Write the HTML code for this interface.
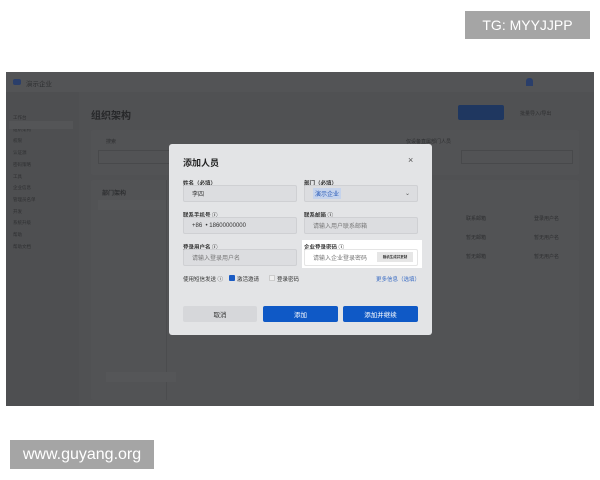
<!DOCTYPE html><html><head><meta charset="utf-8"><style>
*{margin:0;padding:0;box-sizing:border-box}
body{width:600px;height:480px;background:#fff;position:relative;overflow:hidden;font-family:"Liberation Sans","Noto Sans CJK SC",sans-serif}
.a{position:absolute}
.wm{background:#a5a5a5;color:#fff;font-size:14px;display:flex;align-items:center;justify-content:center}
.shot{left:6px;top:72px;width:588px;height:334px;background:#505153;overflow:hidden}
.t{color:#2e2f31;font-size:6px}
.modal{left:163px;top:72px;width:263px;height:191px;background:#e3e4e6;border-radius:3px}
.lbl{font-size:5.5px;color:#333;font-weight:bold}
.in{background:#dcdde0;border:1px solid #cfd0d3;border-radius:2px;height:17px;font-size:6px;color:#777;padding-left:8px;display:flex;align-items:center}
.btn{height:16px;border-radius:2px;font-size:6.5px;display:flex;align-items:center;justify-content:center}
</style></head><body>
<div class="a wm" style="left:465px;top:11px;width:125px;height:28px">TG: MYYJJPP</div>
<div class="a wm" style="left:10px;top:440px;width:144px;height:29px;font-size:16px">www.guyang.org</div>
<div class="a shot">
 <div class="a" style="left:0;top:0;width:588px;height:20px;background:#535456"></div>
 <div class="a" style="left:7px;top:7px;width:8px;height:6px;background:#2a3e6a;border-radius:2px"></div>
 <div class="a t" style="left:20px;top:6px;font-size:6.5px">演示企业</div>
 <div class="a" style="left:520px;top:6px;width:7px;height:8px;background:#2a3e6a;border-radius:3px 3px 0 0"></div>
 <div class="a" style="left:0;top:20px;width:73px;height:314px;background:#4e4f51"></div>
 <div class="a t" style="left:7px;top:40px;line-height:11.7px;font-size:4.5px">工作台<br>组织架构<br>权限<br>认证源<br>密码策略<br>工具<br>企业信息<br>管理员名单<br>开发<br>系统升级<br>帮助<br>帮助文档</div>
 <div class="a" style="left:3px;top:49px;width:64px;height:8px;background:#545557"></div>
 <div class="a t" style="left:85px;top:35px;font-size:10px;font-weight:bold;color:#27282a">组织架构</div>
 <div class="a" style="left:452px;top:33px;width:46px;height:15px;background:#1f3760;border-radius:2px"></div>
 <div class="a t" style="left:514px;top:38px;font-size:5px">批量导入/导出</div>
 <div class="a" style="left:85px;top:58px;width:488px;height:45px;border-radius:2px;background:#525355"></div>
 <div class="a t" style="left:100px;top:66px;font-size:5px">搜索</div>
 <div class="a t" style="left:400px;top:66px;font-size:5px">仅设备直属部门人员</div>
 <div class="a" style="left:92px;top:78px;width:80px;height:14px;border:1px solid #48494b"></div>
 <div class="a" style="left:455px;top:78px;width:112px;height:14px;border:1px solid #48494b"></div>
 <div class="a" style="left:85px;top:108px;width:488px;height:220px;border-radius:2px;background:#525355"></div>
 <div class="a t" style="left:96px;top:116px;font-size:6px;font-weight:bold">部门架构</div>
 <div class="a" style="left:92px;top:128px;width:80px;height:10px;background:#555658"></div>
 <div class="a" style="left:160px;top:108px;width:1px;height:220px;background:#4b4c4e"></div>
 <div class="a" style="left:100px;top:300px;width:70px;height:10px;background:#555658"></div>
 <div class="a t" style="left:460px;top:138px;font-size:5px;line-height:19px">联系邮箱<br>暂无邮箱<br>暂无邮箱</div>
 <div class="a t" style="left:528px;top:138px;font-size:5px;line-height:19px">登录用户名<br>暂无用户名<br>暂无用户名</div>
</div>
<div class="a" style="left:169px;top:144px;width:263px;height:191px;background:#e3e4e6;border-radius:3px"></div>
<div class="a" style="left:183px;top:156px;font-size:9px;font-weight:bold;color:#222">添加人员</div>
<div class="a" style="left:408px;top:155px;font-size:9px;color:#555">×</div>
<div class="a lbl" style="left:183px;top:179px">姓名（必填）</div>
<div class="a lbl" style="left:304px;top:179px">部门（必填）</div>
<div class="a in" style="left:183px;top:185px;width:114px;color:#333">李四</div>
<div class="a in" style="left:304px;top:185px;width:114px"><span style="background:#c5d3ec;color:#2a5bb8;padding:1px 2px">演示企业</span><span style="position:absolute;right:7px;color:#555">⌄</span></div>
<div class="a lbl" style="left:183px;top:211px">联系手机号 ⓘ</div>
<div class="a lbl" style="left:304px;top:211px">联系邮箱 ⓘ</div>
<div class="a in" style="left:183px;top:217px;width:114px;color:#333">+86 &nbsp;• 18600000000</div>
<div class="a in" style="left:304px;top:217px;width:114px">请输入用户联系邮箱</div>
<div class="a lbl" style="left:183px;top:243px">登录用户名 ⓘ</div>
<div class="a in" style="left:183px;top:249px;width:114px">请输入登录用户名</div>
<div class="a" style="left:302px;top:240px;width:120px;height:28px;background:#fff"></div>
<div class="a lbl" style="left:304px;top:243px">企业登录密码 ⓘ</div>
<div class="a in" style="left:304px;top:249px;width:114px;background:#fff;border-color:#e5e5e5">请输入企业登录密码</div>
<div class="a" style="left:377px;top:252px;width:36px;height:10px;background:#e6e6e6;font-size:3.5px;font-weight:bold;color:#333;display:flex;align-items:center;justify-content:center">随机生成并复制</div>
<div class="a lbl" style="left:183px;top:275px;font-weight:normal">使用短信发送 ⓘ</div>
<div class="a" style="left:229px;top:275px;width:6px;height:6px;background:#1a5bc4;border-radius:1px"></div>
<div class="a lbl" style="left:237px;top:275px;font-weight:normal">激活邀请</div>
<div class="a" style="left:269px;top:275px;width:6px;height:6px;border:1px solid #ccc;background:#eee"></div>
<div class="a lbl" style="left:277px;top:275px;font-weight:normal">登录密码</div>
<div class="a lbl" style="left:376px;top:275px;font-weight:normal;color:#3a6cc4">更多信息（选填）</div>
<div class="a btn" style="left:183px;top:306px;width:74px;background:#d6d7da;color:#333">取消</div>
<div class="a btn" style="left:263px;top:306px;width:75px;background:#0f59c6;color:#fff">添加</div>
<div class="a btn" style="left:343px;top:306px;width:75px;background:#0f59c6;color:#fff">添加并继续</div>
</body></html>
